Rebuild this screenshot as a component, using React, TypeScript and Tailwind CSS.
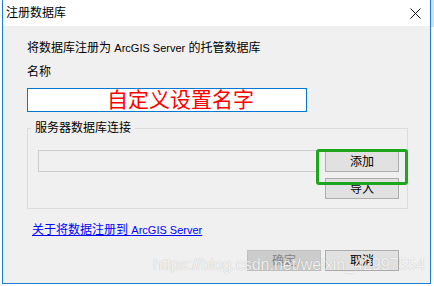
const ui = { fontFamily: '"Liberation Sans", "Noto Sans CJK SC", sans-serif' };

function WinButton({ label, disabled }: { label: string; disabled?: boolean }) {
  return (
    <div
      className={`w-[74px] h-[21px] flex items-center justify-center border text-[12px] leading-none ${
        disabled ? 'bg-[#cccccc] border-[#bfbfbf] text-[#838383]' : 'bg-[#e1e1e1] border-[#adadad] text-black'
      }`}
    >
      {label}
    </div>
  );
}

export default function App() {
  return (
    <div className="w-[434px] h-[286px] bg-white overflow-hidden relative" style={ui}>
      {/* dialog window */}
      <div className="ml-[2px] w-[429px] h-[284px] border border-t-0 border-[#1a7fd4] flex flex-col">
        {/* title bar */}
        <div className="h-[26px] bg-white flex items-center justify-between pl-[3px] pr-[8px]">
          <span className="text-[12px] text-black leading-none">注册数据库</span>
          <svg width="11" height="11" viewBox="0 0 11 11" className="mr-[1px]">
            <path d="M0.5 0.5 L10.5 10.5 M10.5 0.5 L0.5 10.5" stroke="#111" strokeWidth="1" />
          </svg>
        </div>

        {/* body */}
        <div className="flex-1 bg-[#f0f0f0] pl-[24px] pr-[22px] flex flex-col">
          <p className="mt-[14px] text-[12px] leading-[16px] text-black">
            将数据库注册为 <span className="text-[11px]">ArcGIS Server</span> 的托管数据库
          </p>
          <p className="mt-[8px] text-[12px] leading-[16px] text-black">名称</p>

          <div className="mt-[8px] w-[280px] h-[24px] bg-white border border-[#0078d7] flex items-start overflow-visible">
            <span
              className="pl-[79px] -mt-[3px] text-[21px] leading-[24px] text-[#fe0000] whitespace-nowrap"
              style={{ fontFamily: '"Noto Sans CJK SC", sans-serif' }}
            >
              自定义设置名字
            </span>
          </div>

          <fieldset className="mt-[8px] m-0 p-0 border border-[#dcdcdc] relative">
            <legend className="ml-[3px] px-[4px] text-[12px] leading-[16px] text-black">服务器数据库连接</legend>
            <div className="flex pl-[10px] pt-[14px] pb-[9px]">
              <div className="w-[279px] h-[22px] border border-[#cccccc] bg-[#f0f0f0]" />
              <div className="ml-[8px] flex flex-col gap-[6px] pt-[1px]">
                <WinButton label="添加" />
                <WinButton label="导入" />
              </div>
            </div>
            {/* green highlight annotation */}
            <div className="absolute left-[288px] top-[13px] w-[92px] h-[36px] border-[3px] border-[#1fa61f] rounded-[3px]" />
          </fieldset>

          <a className="mt-[13px] ml-[5px] text-[12px] leading-[16px] text-[#0000ff] underline self-start">
            关于将数据注册到 <span className="text-[11px]">ArcGIS Server</span>
          </a>

          <div className="mt-[12px] mr-[9px] flex justify-end gap-[4px]">
            <WinButton label="确定" disabled />
            <WinButton label="取消" />
          </div>
        </div>
      </div>

      {/* right edge of background window */}
      <div className="absolute right-0 top-0 w-[3px] h-[27px] bg-[#cfe3f5]" />

      {/* watermark */}
      <div
        className="absolute left-[153px] top-[255px] text-[16px] leading-[20px] text-white/85 whitespace-nowrap [text-shadow:0_0_1px_rgba(0,0,0,0.3)]"
        style={{ fontFamily: '"Liberation Sans", Arial, sans-serif' }}
      >
        https://blog.csdn.net/weixin_42997554
      </div>
    </div>
  );
}
